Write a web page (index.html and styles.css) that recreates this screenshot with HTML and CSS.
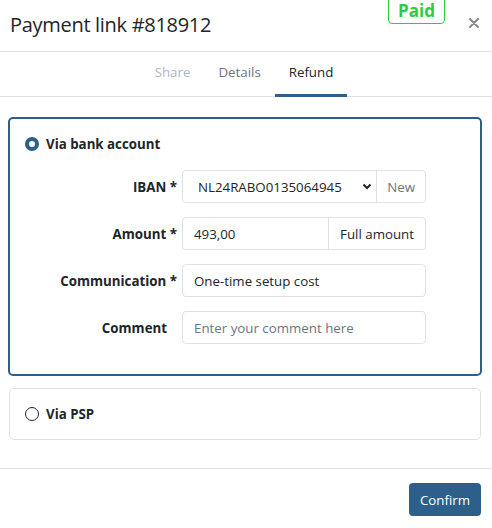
FILE: index.html
```html
<!DOCTYPE html>
<html>
<head>
<meta charset="utf-8">
<link rel="stylesheet" href="styles.css">
</head>
<body>
<div class="modal">
  <header class="head">
    <h1 class="title">Payment link #818912</h1>
    <span class="badge">Paid</span>
    <button class="close" aria-label="Close">
      <svg width="10" height="10" viewBox="0 0 10 10"><path d="M1 1L9 9M9 1L1 9" stroke="#8a8a8a" stroke-width="2" stroke-linecap="round"/></svg>
    </button>
  </header>
  <nav class="tabs">
    <span class="tab tab-muted">Share</span>
    <span class="tab">Details</span>
    <span class="tab tab-active">Refund</span>
  </nav>
  <main class="body">
    <section class="card card-selected">
      <label class="choice"><span class="radio radio-on"></span>Via bank account</label>
      <div class="form">
        <div class="lbl">IBAN *</div>
        <div class="group">
          <div class="select">
            <span class="select-val">NL24RABO0135064945</span>
            <svg class="chev" width="10" height="7" viewBox="0 0 10 7"><path d="M1.5 1.5L5 5L8.5 1.5" fill="none" stroke="#212529" stroke-width="2"/></svg>
          </div>
          <span class="addon addon-muted">New</span>
        </div>
        <div class="lbl">Amount *</div>
        <div class="group">
          <div class="field">493,00</div>
          <span class="addon">Full amount</span>
        </div>
        <div class="lbl">Communication *</div>
        <div class="group"><div class="field">One-time setup cost</div></div>
        <div class="lbl lbl-pad">Comment</div>
        <div class="group"><div class="field field-ph">Enter your comment here</div></div>
      </div>
    </section>
    <section class="card card-plain">
      <label class="choice"><span class="radio"></span>Via PSP</label>
    </section>
  </main>
  <footer class="foot">
    <button class="btn">Confirm</button>
  </footer>
</div>
</body>
</html>
```

FILE: styles.css
```css
* { box-sizing: border-box; }
html, body { margin: 0; padding: 0; background: #fff; }
body {
  font-family: "Open Sans", "Noto Sans", sans-serif;
  color: #212529;
  width: 492px;
  height: 528px;
  overflow: hidden;
}
.modal { width: 492px; }
.head {
  position: relative;
  height: 52px;
  border-bottom: 1px solid #dee2e6;
  display: flex;
  align-items: center;
  padding: 0 10px;
}
.title {
  margin: 0;
  font-size: 20px;
  font-weight: 400;
  letter-spacing: -0.3px;
  color: #212529;
  padding-bottom: 2px;
}
.badge {
  position: absolute;
  left: 388px;
  top: -6px;
  width: 57px;
  height: 30px;
  border: 1px solid #2ecc40;
  border-radius: 4px;
  color: #2ecc40;
  font-weight: 700;
  font-size: 17px;
  display: flex;
  align-items: flex-end;
  justify-content: center;
  padding-bottom: 2px;
  line-height: 20px;
}
.close {
  position: absolute;
  left: 468px;
  top: 17px;
  width: 12px;
  height: 12px;
  padding: 0;
  border: 0;
  background: none;
  display: flex;
  align-items: center;
  justify-content: center;
}
.tabs {
  height: 45px;
  border-bottom: 1px solid #dee2e6;
  display: flex;
  justify-content: center;
  padding-right: 4px;
}
.tab {
  display: flex;
  align-items: center;
  padding: 0 14px 2px;
  font-size: 13.3px;
  color: #6c757d;
  border-bottom: 3px solid transparent;
  margin-bottom: -1px;
}
.tab-muted { color: #adb5bd; }
.tab-active { color: #212529; border-bottom-color: #2c5f8a; }
.body {
  padding: 20px 10px 28px 8px;
  display: flex;
  flex-direction: column;
  gap: 12px;
}
.card {
  border-radius: 5px;
  background: #fff;
}
.card-selected {
  border: 2px solid #2c5f8a;
  padding: 15px 15px 30px;
}
.card-plain {
  border: 1px solid #dee2e6;
  margin: 0 1px;
  padding: 15px 15px 15px;
}
.choice {
  display: flex;
  align-items: center;
  gap: 7px;
  height: 20px;
  font-size: 13.3px;
  font-weight: 700;
}
.radio {
  width: 14px;
  height: 14px;
  border-radius: 50%;
  border: 1.5px solid #212529;
  background: #fff;
  flex: none;
}
.radio-on {
  border: 4px solid #2c5f8a;
}
.form {
  margin-top: 16px;
  display: grid;
  grid-template-columns: 152px 244px;
  column-gap: 5px;
  row-gap: 14px;
  align-items: center;
}
.lbl {
  text-align: right;
  font-size: 13.3px;
  font-weight: 700;
}
.lbl-pad { padding-right: 10px; }
.group {
  display: flex;
  height: 33px;
  border: 1px solid #dee2e6;
  border-radius: 4px;
  font-size: 13.3px;
  overflow: hidden;
}
.field {
  flex: 1;
  display: flex;
  align-items: center;
  padding: 0 11px;
  color: #212529;
}
.field-ph { color: #6c757d; }
.select {
  flex: 1;
  display: flex;
  align-items: center;
  padding: 0 4px 0 15px;
}
.select-val { flex: 1; }
.chev { flex: none; }
.addon {
  display: flex;
  align-items: center;
  padding: 0 11px;
  border-left: 1px solid #dee2e6;
  color: #212529;
}
.addon-muted { color: #6c757d; padding: 0 10px; }
.foot {
  border-top: 1px solid #dee2e6;
  display: flex;
  justify-content: flex-end;
  padding: 14px 11px 0 0;
}
.btn {
  width: 72px;
  height: 33px;
  border: 0;
  border-radius: 4px;
  background: #2c5f8a;
  color: #fff;
  font-family: inherit;
  font-size: 13.3px;
  padding: 0;
}
```
